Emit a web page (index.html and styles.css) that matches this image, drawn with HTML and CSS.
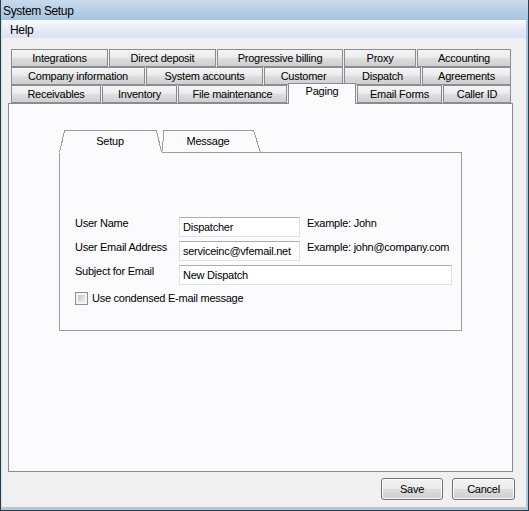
FILE: index.html
```html
<!DOCTYPE html>
<html>
<head>
<meta charset="utf-8">
<title>System Setup</title>
<link rel="stylesheet" href="styles.css">
</head>
<body>
<div class="window">
  <div class="titlebar">System Setup</div>
  <div class="frame">
    <div class="client">
      <div class="menubar"><span class="menu-item">Help</span></div>

      <div class="tabstrip">
        <div class="tabrow">
          <div class="tab w-integrations">Integrations</div>
          <div class="tab w-direct">Direct deposit</div>
          <div class="tab w-progressive">Progressive billing</div>
          <div class="tab w-proxy">Proxy</div>
          <div class="tab w-accounting">Accounting</div>
        </div>
        <div class="tabrow">
          <div class="tab w-company">Company information</div>
          <div class="tab w-sysacc">System accounts</div>
          <div class="tab w-customer">Customer</div>
          <div class="tab w-dispatch">Dispatch</div>
          <div class="tab w-agreements">Agreements</div>
        </div>
        <div class="tabrow">
          <div class="tab w-receivables">Receivables</div>
          <div class="tab w-inventory">Inventory</div>
          <div class="tab w-filemaint">File maintenance</div>
          <div class="tab sel w-paging">Paging</div>
          <div class="tab w-emailforms">Email Forms</div>
          <div class="tab w-callerid">Caller ID</div>
        </div>
      </div>

      <div class="panel">
        <div class="subtabs">
          <div class="subhead">
            <svg class="subhead-lines" width="403" height="23" viewBox="0 0 403 23" aria-hidden="true">
              <path d="M0.5,22.5 L5.5,0.5 H97.5 L102.5,22.5" />
              <path d="M103.5,21.5 L104.5,0.5 H194.5 L201.5,22.5" />
              <path d="M102.5,22.5 H402.5" />
            </svg>
            <span class="subtab subtab-setup">Setup</span>
            <span class="subtab subtab-message">Message</span>
          </div>
          <div class="subbody">
            <div class="form">
              <div class="lbl">User Name</div>
              <div class="field">Dispatcher</div>
              <div class="example">Example: John</div>

              <div class="lbl">User Email Address</div>
              <div class="field">serviceinc@vfemail.net</div>
              <div class="example">Example: john@company.com</div>

              <div class="lbl">Subject for Email</div>
              <div class="field field-wide">New Dispatch</div>

              <div class="checkrow">
                <span class="check"></span>
                <span class="check-label">Use condensed E-mail message</span>
              </div>
            </div>
          </div>
        </div>
      </div>

      <div class="actions">
        <div class="btn btn-save">Save</div>
        <div class="btn btn-cancel">Cancel</div>
      </div>
    </div>
  </div>
</div>
</body>
</html>
```

FILE: styles.css
```css
* { box-sizing: border-box; }
html, body { margin: 0; padding: 0; }
body {
  width: 529px;
  height: 511px;
  overflow: hidden;
  background: #f0f0f0;
  font-family: "Liberation Sans", Arial, sans-serif;
  font-size: 11px;
  letter-spacing: -0.25px;
  color: #000;
}

.window {
  width: 529px;
  height: 511px;
  display: flex;
  flex-direction: column;
  border: 1px solid #2f3c49;
  border-top: 0;
  background: #a8c7e3;
}

.titlebar {
  flex: none;
  height: 20px;
  padding-left: 2px;
  background: linear-gradient(#c9daed, #a7c3e0);
  font-size: 12px;
  line-height: 22px;
  letter-spacing: -0.35px;
}

.frame {
  flex: 1;
  display: flex;
  border-left: 1px solid #cfdbe7;
  border-right: 2px solid #a8c9e5;
  border-bottom: 3px solid #a8c9e5;
  min-height: 0;
}

.client {
  flex: 1;
  display: flex;
  flex-direction: column;
  background: #f0f0f0;
  min-height: 0;
}

.menubar {
  flex: none;
  height: 18px;
  padding: 3px 0 0 8px;
  background: linear-gradient(#fbfcfe, #e9edf8 40%, #dce2f3);
  font-size: 12px;
  line-height: 14px;
  letter-spacing: -0.3px;
}

/* top tab strip */
.tabstrip {
  flex: none;
  width: 500px;
  margin: 11px 0 0 9px;
}
.tabrow {
  display: flex;
  gap: 1px;
  height: 18px;
}
.tab {
  flex: none;
  height: 18px;
  border: 1px solid #898c95;
  background: linear-gradient(#f5f5f5, #ececec 45%, #dcdcdc 55%, #d0d0d0);
  text-align: center;
  line-height: 16px;
  white-space: nowrap;
}
.tab.sel {
  position: relative;
  z-index: 2;
  margin-top: -2px;
  height: 21px;
  border-bottom: 0;
  background: #fbfbfd;
  line-height: 14px;
}

.w-integrations { width: 97px; }
.w-direct { width: 107px; }
.w-progressive { width: 126px; }
.w-proxy { width: 72px; }
.w-accounting { width: 94px; }

.w-company { width: 134px; }
.w-sysacc { width: 117px; }
.w-customer { width: 79px; }
.w-dispatch { width: 77px; }
.w-agreements { width: 89px; }

.w-receivables { width: 90px; }
.w-inventory { width: 75px; }
.w-filemaint { width: 109px; }
.w-paging { width: 68px; }
.w-emailforms { width: 85px; }
.w-callerid { width: 68px; }

/* main panel */
.panel {
  flex: none;
  height: 369px;
  margin: 0 13px 0 6px;
  border: 1px solid #898c95;
  background: #fbfbfd;
}

.subtabs {
  width: 403px;
  margin: 26px 0 0 50px;
}
.subhead {
  position: relative;
  height: 23px;
  display: flex;
}
.subhead-lines {
  position: absolute;
  left: 0;
  top: 0;
  fill: none;
  stroke: #9d9d9d;
  stroke-width: 1;
  shape-rendering: crispEdges;
}
.subtab {
  display: block;
  text-align: center;
  line-height: 22px;
}
.subtab-setup { width: 102px; }
.subtab-message { width: 94px; }

.subbody {
  height: 178px;
  border-left: 1px solid #9d9d9d;
  border-right: 1px solid #9d9d9d;
  border-bottom: 1px solid #9d9d9d;
  padding: 64px 0 0 15px;
}

.form {
  display: grid;
  grid-template-columns: 97px 121px auto;
  column-gap: 7px;
  row-gap: 4px;
  align-items: start;
}
.lbl, .example {
  line-height: 13px;
  white-space: nowrap;
}
.field {
  height: 20px;
  padding: 0 0 0 3px;
  line-height: 18px;
  background: #fff;
  border: 1px solid #dde2e8;
  border-top-color: #abadb3;
  white-space: nowrap;
  overflow: hidden;
}
.field-wide {
  grid-column: 2 / 4;
  width: 273px;
}
.checkrow {
  grid-column: 1 / 4;
  display: flex;
  align-items: center;
  gap: 4px;
  margin-top: 3px;
}
.check {
  flex: none;
  width: 13px;
  height: 13px;
  padding: 2px;
  border: 1px solid #8e8f8f;
  background: #f4f4f4;
}
.check::after {
  content: "";
  display: block;
  width: 7px;
  height: 7px;
  background: linear-gradient(135deg, #c4c8ce, #eeeeee);
}
.check-label { line-height: 13px; }

/* buttons */
.actions {
  flex: none;
  display: flex;
  justify-content: flex-end;
  gap: 9px;
  margin: 6px 11px 0 0;
}
.btn {
  height: 22px;
  border: 1px solid #707070;
  border-radius: 3px;
  background: linear-gradient(#f3f3f3, #ebebeb 48%, #dddddd 52%, #cfcfcf);
  box-shadow: inset 0 0 0 1px #fbfbfb;
  text-align: center;
  line-height: 20px;
}
.btn-save { width: 62px; }
.btn-cancel { width: 63px; }
```
